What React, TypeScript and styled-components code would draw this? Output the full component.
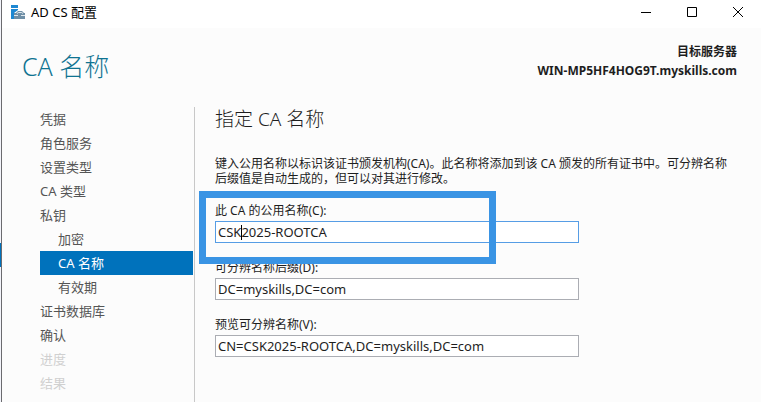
import React, { useState } from "react";
import styled, { createGlobalStyle } from "styled-components";

const GlobalStyle = createGlobalStyle`
  *, *::before, *::after { box-sizing: border-box; }
  body {
    margin: 0;
    background: #fcfcfc;
    color: #1e1e1e;
    font: 12px/15px "Noto Sans", "Noto Sans CJK SC", sans-serif;
  }
  button, input { font: inherit; color: inherit; }
`;

const Desktop = styled.div`
  display: grid;
  grid-template-columns: 1px minmax(0, 1fr);
  min-height: 100vh;
`;

const Behind = styled.div`
  display: flex;
  flex-direction: column;
  padding-top: 243px;
  background: #f3f4fa;
`;

const BehindSelection = styled.div`
  height: 24px;
  background: #0072bc;
`;

const Window = styled.main`
  display: flex;
  flex-direction: column;
  border-left: 1px solid #6b6b6f;
  background: #fcfcfc;
`;

const TitleBar = styled.header`
  display: flex;
  align-items: center;
  height: 28px;
  padding-left: 9px;
  background: #ffffff;
`;

const WindowTitle = styled.span`
  flex: 1;
  padding-left: 5px;
  padding-bottom: 3px;
  color: #000000;
  font-size: 13px;
`;

const AppIcon = styled.svg`
  width: 15px;
  height: 16px;
  margin-bottom: 4px;
`;

const CaptionButton = styled.button`
  display: grid;
  place-items: center;
  width: 46px;
  height: 28px;
  padding: 0 0 4px;
  border: 0;
  background: transparent;
  color: #000000;
`;

const Banner = styled.div`
  display: flex;
  justify-content: space-between;
  align-items: flex-start;
  height: 79px;
  padding: 14px 24px 0 20px;
`;

const PageTitle = styled.h1`
  margin: 8px 0 0;
  color: #0f7391;
  font-size: 25px;
  font-weight: 300;
  line-height: 32px;
`;

const Target = styled.div`
  text-align: right;
  font-weight: 700;
  line-height: 19px;
`;

const Body = styled.div`
  display: flex;
  flex: 1;
`;

const Steps = styled.nav`
  display: flex;
  flex-direction: column;
  flex: none;
  width: 193px;
  padding: 0 1px 0 38px;
  border-right: 1px solid #c8c8c8;
`;

const Step = styled.button<{ $nested?: boolean; $current?: boolean }>`
  height: 24px;
  padding: 0 0 0 ${(p) => (p.$nested ? 18 : 0)}px;
  border: 0;
  background: ${(p) => (p.$current ? "#0072bc" : "transparent")};
  color: ${(p) => (p.$current ? "#ffffff" : "#555555")};
  font-size: 13px;
  line-height: 24px;
  text-align: left;
  &:disabled { color: #d0d0d0; }
`;

const Content = styled.section`
  flex: 1;
  min-width: 0;
  padding: 0 24px 0 20px;
`;

const SectionTitle = styled.h2`
  margin: 0 0 25px;
  font-size: 19px;
  font-weight: 300;
  line-height: 24px;
`;

const Intro = styled.p`
  margin: 0 0 17px;
`;

const Form = styled.form`
  display: flex;
  flex-direction: column;
  gap: 17px;
  max-width: 364px;
`;

const Field = styled.div`
  display: flex;
  flex-direction: column;
  gap: 3px;
  position: relative;
`;

const TextBox = styled.input<{ $active?: boolean }>`
  width: 100%;
  height: 22px;
  padding: 0 2px;
  border: 1px solid ${(p) => (p.$active ? "#569de5" : "#abadb3")};
  border-radius: 0;
  outline: 0;
  background: #ffffff;
  font-size: 13px;
`;

const Caret = styled.span`
  position: absolute;
  bottom: 3px;
  left: 26px;
  width: 1px;
  height: 15px;
  background: #000000;
`;

const Marker = styled.div`
  position: absolute;
  top: -12px;
  left: -16px;
  width: 297px;
  height: 73px;
  border: 7px solid #3a94e4;
  pointer-events: none;
  z-index: 1;
`;

type StepItem = { label: string; nested?: boolean; disabled?: boolean };

const steps: StepItem[] = [
  { label: "凭据" },
  { label: "角色服务" },
  { label: "设置类型" },
  { label: "CA 类型" },
  { label: "私钥" },
  { label: "加密", nested: true },
  { label: "CA 名称", nested: true },
  { label: "有效期", nested: true },
  { label: "证书数据库" },
  { label: "确认" },
  { label: "进度", disabled: true },
  { label: "结果", disabled: true },
];

export default function App() {
  const [current, setCurrent] = useState("CA 名称");
  const [name, setName] = useState("CSK2025-ROOTCA");
  const [suffix, setSuffix] = useState("DC=myskills,DC=com");

  return (
    <>
      <GlobalStyle />
      <Desktop>
        <Behind>
          <BehindSelection />
        </Behind>
        <Window>
          <TitleBar>
            <AppIcon viewBox="0 0 15 16" aria-hidden="true">
              <path d="M0 1h7v3H0zM0 5h7v1L3 9v6H0z" fill="#1e88d2" />
              <path d="M3 9h2l2-2h4l2 2h1v6H3z" fill="#6f8fa6" />
              <path d="M6 9.5l1.5-1h3l1.5 1M3 11.5h4M10 11.5h4" fill="none" stroke="#ffffff" strokeWidth="0.8" />
            </AppIcon>
            <WindowTitle>AD CS 配置</WindowTitle>
            <CaptionButton aria-label="最小化">
              <svg width="10" height="10"><path d="M0 5.5h10" stroke="currentColor" /></svg>
            </CaptionButton>
            <CaptionButton aria-label="最大化">
              <svg width="10" height="10"><path d="M.5.5h9v9h-9z" fill="none" stroke="currentColor" /></svg>
            </CaptionButton>
            <CaptionButton aria-label="关闭">
              <svg width="10" height="10"><path d="M0 0l10 10M10 0L0 10" stroke="currentColor" /></svg>
            </CaptionButton>
          </TitleBar>
          <Banner>
            <PageTitle>CA 名称</PageTitle>
            <Target>
              <div>目标服务器</div>
              <div>WIN-MP5HF4HOG9T.myskills.com</div>
            </Target>
          </Banner>
          <Body>
            <Steps>
              {steps.map((s) => (
                <Step
                  key={s.label}
                  $nested={s.nested}
                  $current={s.label === current}
                  disabled={s.disabled}
                  onClick={() => setCurrent(s.label)}
                >
                  {s.label}
                </Step>
              ))}
            </Steps>
            <Content>
              <SectionTitle>指定 CA 名称</SectionTitle>
              <Intro>
                键入公用名称以标识该证书颁发机构(CA)。此名称将添加到该 CA 颁发的所有证书中。可分辨名称后缀值是自动生成的，但可以对其进行修改。
              </Intro>
              <Form>
                <Field>
                  <label htmlFor="common">此 CA 的公用名称(C):</label>
                  <TextBox id="common" $active value={name} onChange={(e) => setName(e.target.value)} />
                  <Caret />
                  <Marker />
                </Field>
                <Field>
                  <label htmlFor="suffix">可分辨名称后缀(D):</label>
                  <TextBox id="suffix" value={suffix} onChange={(e) => setSuffix(e.target.value)} />
                </Field>
                <Field>
                  <label htmlFor="preview">预览可分辨名称(V):</label>
                  <TextBox id="preview" readOnly value={`CN=${name},${suffix}`} />
                </Field>
              </Form>
            </Content>
          </Body>
        </Window>
      </Desktop>
    </>
  );
}
